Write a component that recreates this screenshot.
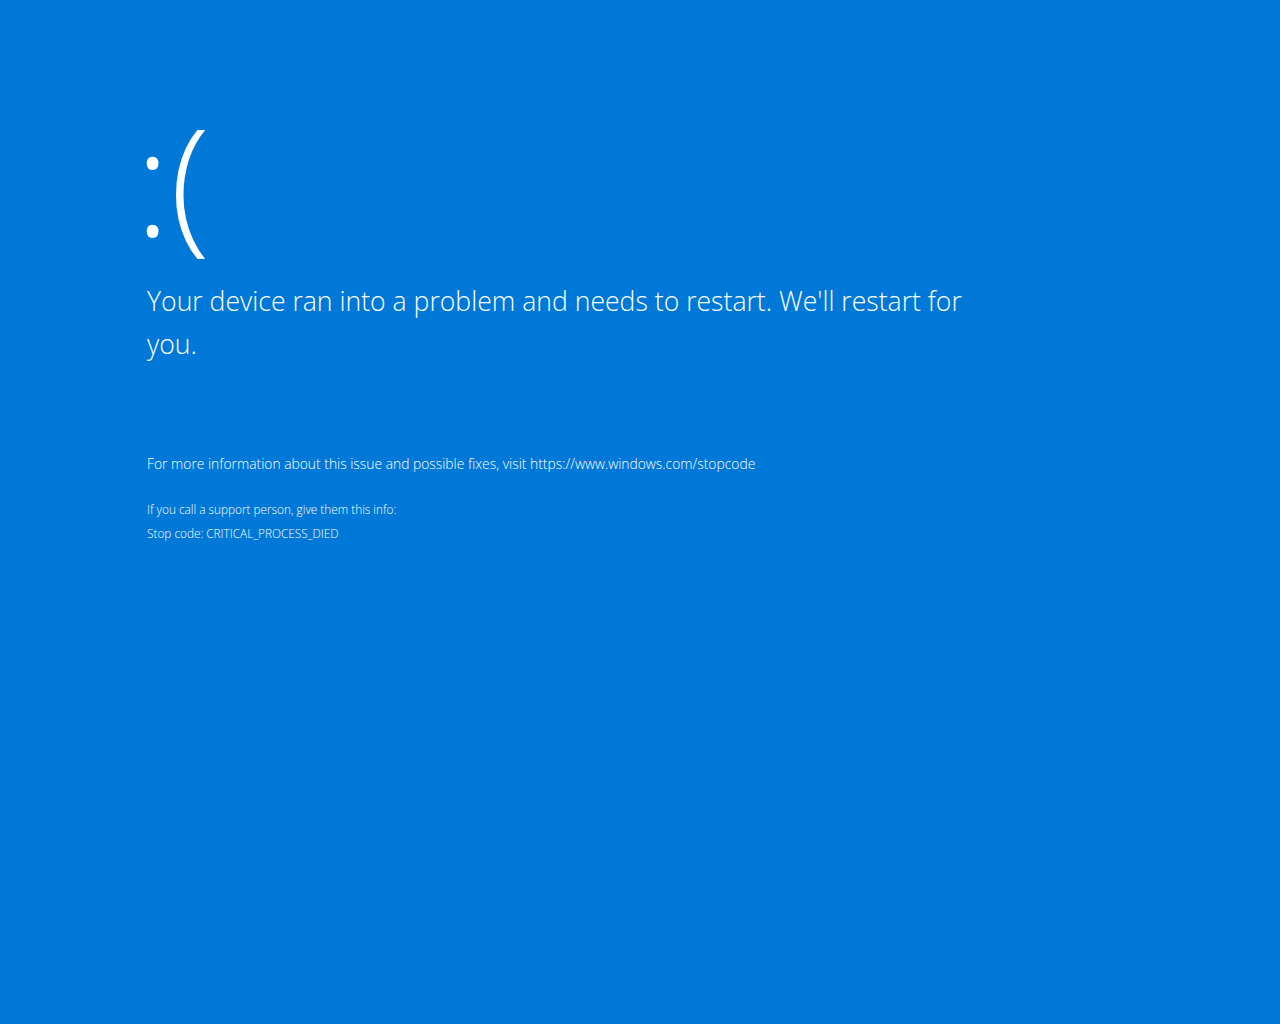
import React from "react";

const App = () => {
  return (
    <div
      className="min-h-screen w-full bg-[#0078d7] text-white font-light pl-[147px] pt-[96px]"
      style={{ fontFamily: '"Open Sans", "Noto Sans", "Liberation Sans", sans-serif' }}
    >
      <div className="text-[147px] leading-[166px] -ml-[12px] h-[178px]">:(</div>
      <h1 className="mt-[6px] w-[840px] text-[26.6px] leading-[43px] font-light">
        Your device ran into a problem and needs to restart. We'll restart for you.
      </h1>
      <p className="mt-[88px] text-[13.85px] leading-[20px]">
        For more information about this issue and possible fixes, visit https://www.windows.com/stopcode
      </p>
      <div className="mt-[23px] text-[11.8px] leading-[24px]">
        <p>If you call a support person, give them this info:</p>
        <p>Stop code: CRITICAL_PROCESS_DIED</p>
      </div>
    </div>
  );
};

export default App;
